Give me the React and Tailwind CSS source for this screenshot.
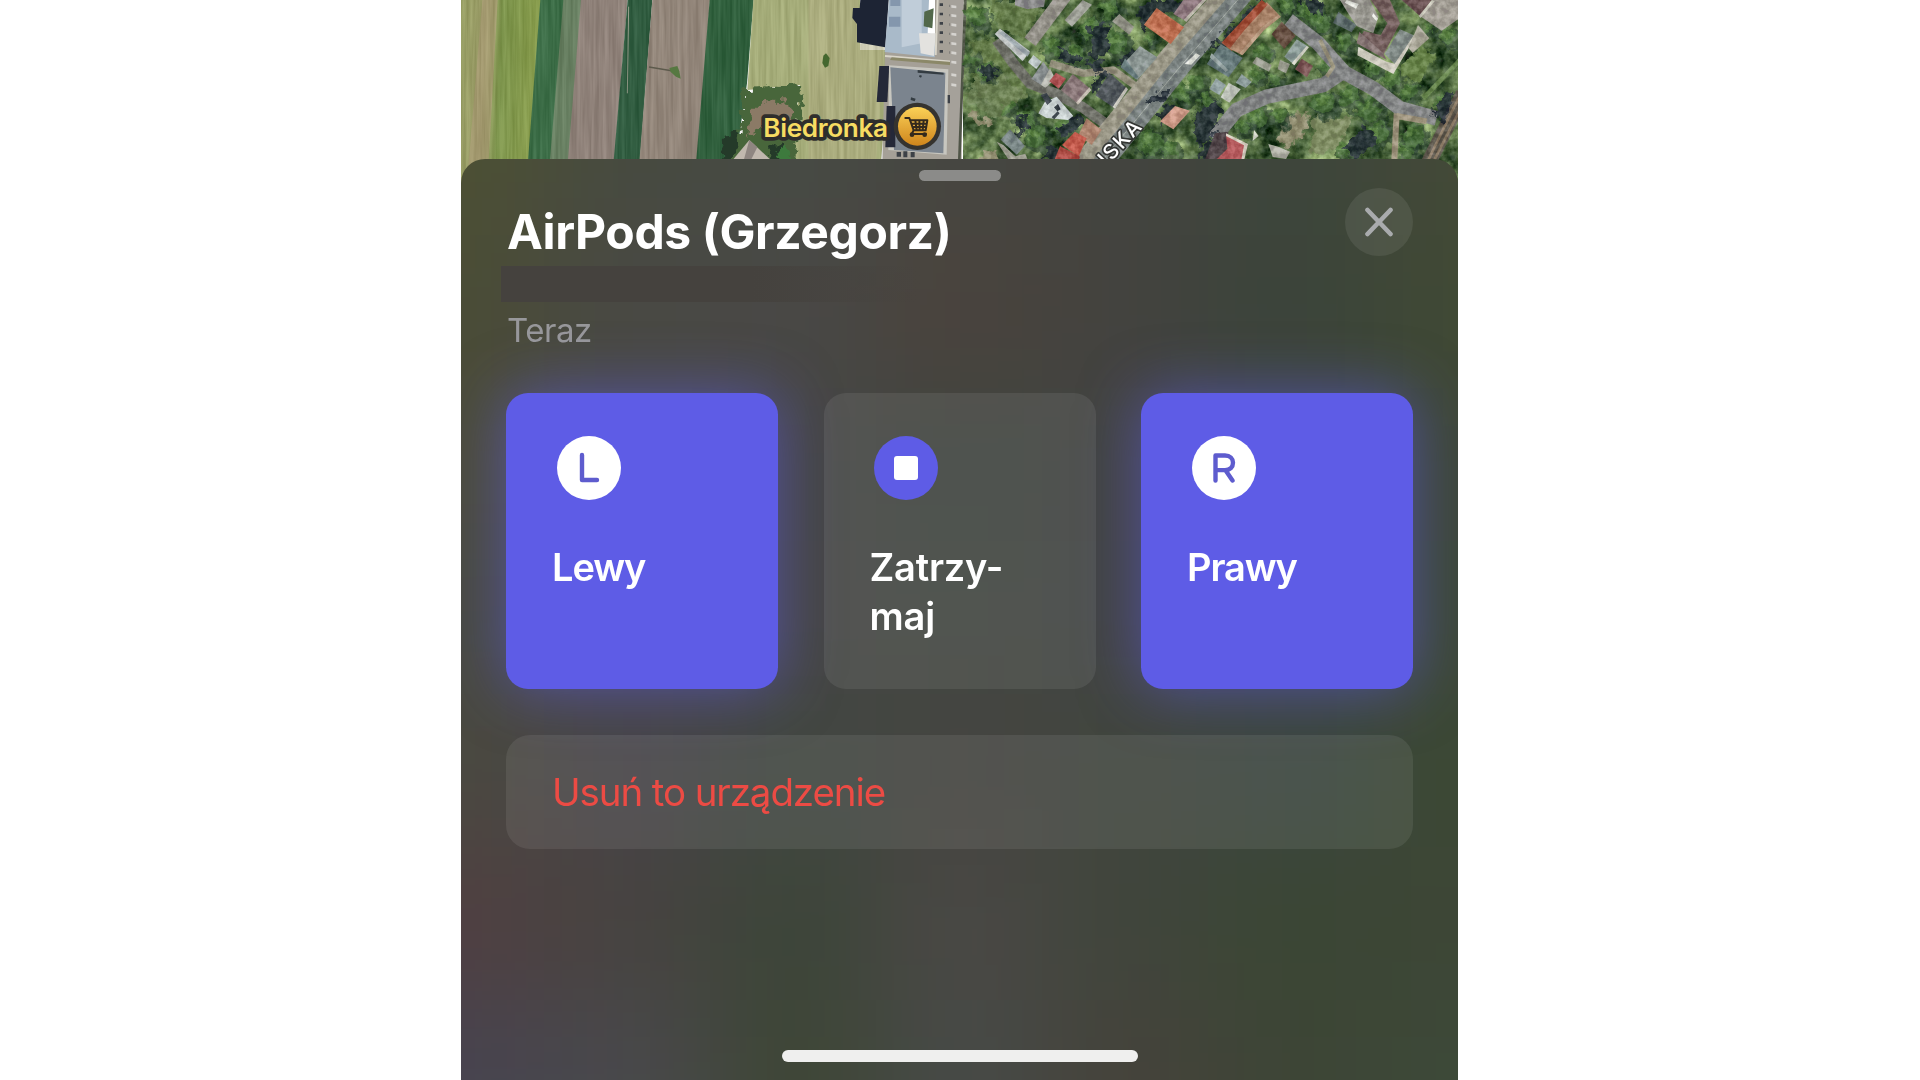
// rows of tint behind the sheet, softened into a frosted wash
const wash = [
  ['#4c5034', '#474a40', '#474a44', '#464641', '#43443f', '#3d453b', '#434938'],
  ['#4a4c36', '#494944', '#494846', '#4a433c', '#43433f', '#3b443a', '#404934'],
  ['#4c4c3c', '#4a4a4a', '#464646', '#3f453f', '#434443', '#404642', '#3e4739'],
  ['#484a42', '#484849', '#464645', '#434742', '#424443', '#404642', '#3d4838'],
  ['#4a4940', '#474449', '#414741', '#454440', '#41463e', '#3b4640', '#3c4834'],
  ['#503f41', '#474340', '#3c4539', '#4a4845', '#40453c', '#3b4634', '#3d4636'],
  ['#474450', '#49494c', '#3e4636', '#474a47', '#45433b', '#3d4536', '#3d4938'],
]

const trees = [
  [80, 50, 40], [60, 180, 30], [110, 215, 34], [310, 140, 42], [420, 90, 45], [500, 130, 46],
  [380, 170, 40], [480, 30, 38], [600, 120, 22], [230, 360, 34], [260, 410, 44], [340, 380, 34],
  [180, 330, 22], [700, 280, 40], [740, 250, 34], [600, 430, 50], [660, 450, 34], [770, 300, 30],
  [1010, 20, 40], [1080, 40, 44], [1120, 70, 36], [1180, 130, 36], [1270, 210, 30], [1330, 240, 36],
  [1380, 280, 34], [940, 160, 30], [920, 230, 30], [980, 240, 24], [1120, 200, 26], [920, 350, 44],
  [880, 380, 30], [990, 350, 30], [1120, 310, 44], [1200, 290, 40], [1260, 330, 46], [1280, 400, 44],
  [1190, 450, 34], [1390, 410, 44], [1370, 460, 34], [1480, 300, 30], [1500, 110, 34], [1440, 90, 24],
]

const shadows = [
  'M560 20l60-20h90l-30 45-70-5-30 60z',
  'M420 80l50-20 10 90-50 30z',
  'M400 200l60-30-10 45z',
  'M600 290l60-30-10 40-60 10z',
  'M330 150l70 20-20 30-55-20z',
  'M418 262l38-50 20 8-38 66z',
  'M620 340l40-30 15 15-40 50z',
  'M730 350l60-50 30 30-40 80-40 40z',
  'M740 478l55-85 30 15-15 70z',
  'M1180 440l60-60 50 30-70 68z',
  'M85 195l50 5 10 30-40 10z',
  'M195 350l40-5 5 40-40 20z',
  'M330 380l60-40 10 30-70 50z',
  'M270 478l20-40 50 20-10 20z',
  'M770 150l90-80 60-70h25l-115 140z',
  'M500 190l55-45 10 12-50 45z',
  'M1440 340l45-50 30-10-40 90z',
  'M1050 0h60l10 50-40-20z',
]

function Satellite() {
  return (
    <svg viewBox="0 0 2991 585" className="block h-[195px] w-full" aria-hidden="true">
      <defs>
        <filter id="leaves" x="0" y="0" width="100%" height="100%" colorInterpolationFilters="sRGB">
          <feTurbulence type="fractalNoise" baseFrequency="0.014" numOctaves="4" seed="8" />
          <feColorMatrix values="1.1 0 0 0 -0.24  1.1 0 0 0 -0.13  0.8 0 0 0 -0.16  0 0 0 0 1" />
        </filter>
        <filter id="furrows" x="0" y="0" width="100%" height="100%" colorInterpolationFilters="sRGB">
          <feTurbulence type="fractalNoise" baseFrequency="0.09 0.004" numOctaves="3" seed="3" />
          <feColorMatrix values="2 0 0 0 -0.5  2 0 0 0 -0.5  2 0 0 0 -0.5  0 0 0 0 0.09" />
        </filter>
        <filter id="grain" x="0" y="0" width="100%" height="100%" colorInterpolationFilters="sRGB">
          <feTurbulence type="fractalNoise" baseFrequency="0.05" numOctaves="3" seed="5" />
          <feColorMatrix values="2.4 0 0 0 -0.75  2.4 0 0 0 -0.7  2.4 0 0 0 -0.8  0 0 0 0 0.16" />
        </filter>
        <filter id="ragged" x="-10%" y="-10%" width="120%" height="120%" colorInterpolationFilters="sRGB">
          <feTurbulence type="fractalNoise" baseFrequency="0.04" numOctaves="3" seed="2" result="n" />
          <feDisplacementMap in="SourceGraphic" in2="n" scale="46" xChannelSelector="R" yChannelSelector="G" />
        </filter>
        <linearGradient id="meadow" x1="0" x2="1" y1="0" y2="0.1">
          <stop offset="0" stopColor="#98a25f" />
          <stop offset="0.35" stopColor="#9c9d64" />
          <stop offset="0.55" stopColor="#7d9748" />
          <stop offset="1" stopColor="#8aa048" />
        </linearGradient>
        <linearGradient id="pin" x1="0" x2="0" y1="0" y2="1">
          <stop offset="0" stopColor="#fbd157" />
          <stop offset="1" stopColor="#cf851c" />
        </linearGradient>
      </defs>

      {/* fields */}
      <g transform="translate(-18 0)">
        <path fill="url(#meadow)" d="M0 0h260l-45 585H0z" />
        <path fill="#ab9c72" opacity=".75" d="M82 0h46l-28 500H40z" />
        <path fill="#356b41" d="M256 0h90l-50 585h-85z" />
        <path fill="#66805f" d="M325 0h56l-38 585h-67z" />
        <path fill="#918279" d="M378 0h140l-48 585H330z" />
        <path fill="#29593a" d="M518 0h74l-45 585h-80z" />
        <path stroke="#97a08c" strokeWidth="3" fill="none" d="M521 20l-4 260" />
        <path fill="#948679" d="M592 0h173l-43 585H545z" />
        <path fill="#2a5e38" d="M764 0h132l-20 250-50 335H715z" />
        <path fill="#a8b078" d="M895 0h320v150h90l-35 435H990l45-330-158 15z" />
        <path fill="#b2b081" opacity=".55" d="M1060 0h150v130h80l-30 400h-200z" />
        <rect width="1300" height="585" filter="url(#furrows)" />
        <g filter="url(#ragged)">
          <path fill="#48663b" d="M868 268l178-14-28 250H805l55-130z" />
          <path fill="#8b7a66" d="M925 300l80 5 10 60-90 15-45 30 5-70z" />
          <path fill="#243a29" d="M800 410l50-10-15 80h-30zM940 430l50 10 10 50h-60z" />
          <path fill="#3d7a3d" d="M968 455l30-10 10 34h-40z" />
        </g>
        <path fill="#c1b8ae" d="M835 478l48-58 62 58z" />
        <path fill="#8f8681" d="M883 420l24 22-18 36h-22z" />
        <path fill="#44672f" d="M1113 160l11 14-4 24-10 5-8-14 3-22z" />
        <path stroke="#5d5a4c" strokeWidth="5" fill="none" d="M582 201l72 12" />
        <path fill="#567841" d="M643 204l24-6 6 16 4 22-14-6-16-14z" />
      </g>

      {/* supermarket block */}
      <g transform="translate(-18 0)">
        <path fill="#a5a097" d="M1290 150l150-10V0h80v585h-240z" />
        <path fill="#1d2434" d="M1216 0h85l-10 142-85-15v-55l-14-18 2-30h20z" />
        <path fill="#a9bac9" d="M1302 0h120l-4 100 24 5-3 67-150-16z" />
        <path fill="#cbd5df" d="M1340 0h60v130l-60 12z" opacity=".7" />
        <path fill="#8497ad" d="M1302 50h34v30h-34zM1306 0h30v18h-30z" />
        <path fill="#e3e2df" d="M1392 100h50l-5 68-40-8z" />
        <path fill="#52684a" d="M1408 35l28-10-4 60-26-6z" />
        <path stroke="#d9d5c9" strokeWidth="6" fill="none" d="M1290 168l210 18M1448 0l-6 165" />
        <path fill="#8b8868" d="M1310 172l180 14v10l-185-16z" />
        <path fill="#242838" d="M1273 198h30l-6 108h-32z" />
        <path fill="#c7c6bf" d="M1302 196l178 12-5 256-175-14z" />
        <path fill="#7b848e" d="M1306 202l165 16-6 242-148-10z" />
        <path fill="#242838" d="M1295 318h26v124h-30z" />
        <path fill="#343c42" d="M1388 210l78 8v6l-78-6zM1394 225l7 2-3 6-6-3zM1368 292l14 4-3 8-12-4z" />
        <g fill="#3d4147">
          {[10, 38, 66, 94, 122, 150].map((y) => (
            <path key={y} d={`M1454 ${y}h10v8h-10zM1484 ${y + 4}h14v7h-14z`} />
          ))}
          <path d="M1478 285h22v25h-22zM1325 456h13v14h-13zM1345 454h12v18h-12zM1367 456h12v16h-12z" />
        </g>
      </g>

      {/* housing estate */}
      <g transform="translate(1467 0)">
        <rect x="40" width="1490" height="585" filter="url(#leaves)" />
        <path fill="#a5a19a" d="M0 0h48L20 585H0z" />
        <g fill="#d5d3cf">
          {[15, 42, 70, 98, 126, 154, 182, 220, 250].map((y) => (
            <path key={y} d={`M4 ${y}l15 2v8l-15-2z`} />
          ))}
        </g>
        <path fill="#505548" d="M42 0h8L28 585h-8z" />

        <g filter="url(#ragged)">
          <path fill="#688048" d="M120 0h100l60 30-60 90-80-40zM60 130l60-20 60 60 60 90-30 50-60 20-80-60z" opacity=".8" />
          <path fill="#6f8355" d="M50 240l100-20 70 60-30 70-60 10-80-60z" opacity=".8" />
          <path fill="#958f72" d="M60 330l70 40-10 14-60-30zM95 450l50 14-10 22H90zM1020 345l60-6-10 60-60 40-30-14z" />
          <path fill="#829064" d="M1090 350l80 10 40-10-50 100-80 20z" />
          <path fill="#668345" d="M1360 190l60-50 40 30-50 70-60 20z" />
          {trees.map(([x, y, r]) => (
            <g key={`${x}-${y}`}>
              <circle cx={x + 8} cy={y + 8} r={r} fill="#20382a" opacity=".6" />
              <circle cx={x - 3} cy={y - 3} r={r * 0.75} fill="#4c7839" opacity=".7" />
              <circle cx={x - 8} cy={y - 9} r={r * 0.35} fill="#6a974b" opacity=".6" />
            </g>
          ))}
        </g>

        {/* streets */}
        <g fill="none" strokeLinejoin="round">
          <path stroke="#6f6e69" strokeWidth="32" d="M140 120l50 70 50 60 75 30 80 40 70 50" />
          <path stroke="#9b9590" strokeWidth="42" d="M350-20L240 125" />
          <path stroke="#968f7d" strokeWidth="22" d="M300 190l100 30 90-10 70 50" />
          <path stroke="#a19b8c" strokeWidth="92" d="M895-70L680 170 385 530" />
          <path stroke="#7b8285" strokeWidth="58" d="M925-70L706 182 410 550" />
          <path stroke="#a8adab" strokeWidth="3" d="M906-50L682 210 400 550" />
          <path stroke="#85858a" strokeWidth="44" d="M1015 60l90 70 75 85-60 40-170 35-90 40-70 85" />
          <path stroke="#85858a" strokeWidth="44" d="M1160 205l110 60 80 60 110 30" />
          <path stroke="#a39a84" strokeWidth="12" d="M1110 120l40 80-20 30" />
          <path stroke="#a3957f" strokeWidth="18" d="M1340 340l-8 160M1340 348l90 16" />
          <path stroke="#5d544c" strokeWidth="46" d="M1540 280l-110 220" />
          <path stroke="#8d7763" strokeWidth="8" d="M1530 285l-105 215M1550 290l-110 215" />
          <path stroke="#68894c" strokeWidth="14" d="M1530 180l-110 115" />
        </g>

        <g filter="url(#ragged)" fill="#182131" opacity=".85">
          {shadows.map((d) => <path key={d} d={d} />)}
        </g>

        {/* roofs */}
        <path fill="#8f8d92" d="M195 0h90l-3 20-50 8-37-12z" />
        <path fill="#c9ccd0" d="M150 86l90 68-22 30-84-82z" />
        <path fill="#a3adb7" d="M157 92l83 66-8 12-84-70z" />
        <path fill="#c7d0d5" d="M250 165l25 20-16 22-25-20z" />
        <path fill="#8b9096" d="M280 185l32 45-28 32-40-26z" />
        <path fill="#c0bfba" d="M300 205l16 32-30 26-13-9z" />
        <path fill="#b74a50" d="M318 218l30 18-22 30-28-22z" />
        <path fill="#8e767c" d="M368 222l50 42-36 46-50-40z" />
        <path fill="#d1c5bd" d="M418 262l6 8-40 44-6-6z" />
        <path fill="#4b505a" d="M478 218l56 50-38 58-60-40z" />
        <path fill="#d5d1ca" d="M534 268l-38 58-8-5 40-60z" />
        <path fill="#8f999a" d="M570 138l52 34-60 68-50-40z" />
        <path fill="#6b8086" d="M525 175l40 55-8 8-45-36z" />
        <path fill="#a5a59f" d="M398 0l28 14-60 66-22-20z" />
        <path fill="#98968d" d="M508 42l44 38-14 24-52-40z" />
        <path fill="#c96a4c" d="M620 24l82 58-40 50-80-58z" />
        <path fill="#dd8867" d="M620 24l-20 48 62 60-80-58z" opacity=".45" />
        <path fill="#907480" d="M700 0h62l-60 60-32-18z" />
        <path fill="#cec5bc" d="M757 0h12l-60 66-8-6z" />
        <path fill="#a44a35" d="M935 0l20 18-110 135-30-25z" />
        <path fill="#b08268" d="M950 5l42 45-50 40-65 76-38-20z" />
        <path fill="#a84630" d="M935 0l18 14-118 128-20-14z" />
        <path fill="#c9a68c" d="M992 50l-50 40-65 76-8-6 64-76 52-40z" opacity=".8" />
        <path fill="#667a80" d="M812 132l66 42-42 58-66-40z" />
        <path fill="#99a7aa" d="M785 160l50 50-8 6-48-44z" />
        <path fill="#9aaaaf" d="M798 235l30 20-20 30-30-18z" />
        <path fill="#cccfc9" d="M836 248l36 20-34 40-26-16z" />
        <path fill="#93a3a7" d="M875 222l30 24-18 18-30-16z" />
        <path fill="#63463b" d="M995 65l42 42-34 40-38-44z" />
        <path fill="#8fa0a0" d="M1040 118l35 22-42 54-30-24z" />
        <path fill="#dfddd3" d="M1070 138l7 4-44 54-8-6z" />
        <path fill="#7d4f53" d="M1055 176l34 22-18 34-36-24z" />
        <path fill="#a1a196" d="M920 170l45 25-8 20-50-26zM990 180l30 12-12 28-25-12z" />
        <path fill="#58666a" d="M1165 35l55 40-15 22-56-28z" />
        <path fill="#9f9b97" d="M1170 0h90l25 50-15 50-50-22-30-45z" />
        <path fill="#f1f1ed" d="M1190 0l36 12-8 14-34-18zM1270 40l14 16-5 8-13-16z" />
        <path fill="#74595c" d="M1262 0h58l30 70-50 95-80-40 22-32 50 12 20-35z" />
        <path fill="#8d777a" d="M1228 95l72 65 10 20-90-50z" />
        <path fill="#858e8e" d="M1350 88l42 18-54 90-34-34z" />
        <path fill="#d8d2c8" d="M1225 140l85 45 24 6 58-86 4 5-66 112-108-56z" />
        <path fill="#68494f" d="M1355 0h90l-35 48z" />
        <path fill="#aaa29c" d="M1445 0h90v50l-60 42-62-42z" />
        <path fill="#ded9cf" d="M1446 0l8 4-42 50-6-6z" />
        <path fill="#b0aa9e" d="M1404 75l34 40-50 44-12-14z" />
        <path fill="#dce3e8" d="M285 305l35-15 50 58-16 12-65-6-24-14z" />
        <path fill="#303744" d="M272 285l18-6 16 24-14 12zM312 322l12-10 8 16-10 6zM305 352l18-18 6 6-16 18z" />
        <path fill="#79868a" d="M180 388l45 50-25 26-48-45z" />
        <path fill="#a9a79c" d="M140 425l20 10 36 34 30-8 10 24h-56z" />
        <path fill="#b98672" d="M410 355l45 34-30 46-40-30z" />
        <path fill="#d3564a" d="M375 395l35 20-24 55-50-35z" />
        <path fill="#b5413d" d="M330 438l60 32-10 30h-75z" />
        <path fill="#d99b8a" d="M675 318l45 14-50 56-40-24z" />
        <path fill="#4a3a43" d="M795 400l40-5-8 90h-65z" />
        <path fill="#bd5058" d="M828 402l62 32-14 50h-82l38-38z" />
        <path fill="#dfd3c8" d="M828 400l66 32-12 50-8-2 8-44-54-28z" />
        <path fill="#e4e3da" d="M912 390l14 18-18 14z" />
        <path fill="#b9b7ae" d="M955 432l30 8 35 15-12 22-40-6z" />
        <path fill="#eeeeea" d="M738 160l12 6-26 28-20-2z" />
        <rect x="40" width="1490" height="585" filter="url(#grain)" />

        <text
          transform="translate(470 500) rotate(-47)"
          className="font-['Inter',sans-serif] text-[62px] font-medium"
          fill="#fff"
          stroke="#343633"
          strokeWidth="10"
          strokeLinejoin="round"
          paintOrder="stroke"
          letterSpacing="5"
        >
          ISKA
        </text>
      </g>

      {/* shop label */}
      <g transform="translate(-18 0)">
        <text
          x="925"
          y="410"
          textLength="373"
          lengthAdjust="spacingAndGlyphs"
          className="font-['Inter',sans-serif] text-[75px] font-semibold tracking-[-1px]"
          fill="#f7dc62"
          stroke="#2f2e2c"
          strokeWidth="22"
          strokeLinejoin="round"
          paintOrder="stroke"
        >
          Biedronka
        </text>
        <circle cx="1387" cy="379" r="71" fill="#35332f" />
        <circle cx="1387" cy="379" r="58" fill="url(#pin)" />
        <g fill="none" stroke="#33291c" strokeWidth="6" strokeLinecap="round" strokeLinejoin="round">
          <path d="M1351 354h12l13 37h36l5-30h-50M1376 391l-6 11h43M1371 371h44M1374 381h40M1381 362l4 28M1393 362l1 28M1406 362l-3 28" />
        </g>
        <circle cx="1371" cy="404" r="7" fill="#33291c" />
        <circle cx="1409" cy="404" r="7" fill="#33291c" />
      </g>
    </svg>
  )
}

function Wash() {
  return (
    <svg viewBox="0 0 997 921" preserveAspectRatio="none" className="absolute inset-0 h-full w-full" aria-hidden="true">
      <filter id="frost" filterUnits="userSpaceOnUse" x="-300" y="-300" width="1600" height="1520" colorInterpolationFilters="sRGB">
        <feGaussianBlur stdDeviation="56" />
      </filter>
      <g filter="url(#frost)">
        <rect x="-300" y="-300" width="1600" height="1520" fill="#42453f" />
        {wash.map((row, r) =>
          row.map((fill, c) => {
            const x = c === 0 ? -300 : c * 166 - 83
            const y = r === 0 ? -300 : r * 153 - 77
            return <rect key={`${r}-${c}`} x={x} y={y} width={c === 0 ? 384 : c === 6 ? 400 : 167} height={r === 0 ? 377 : r === 6 ? 400 : 154} fill={fill} />
          })
        )}
      </g>
    </svg>
  )
}

function Bud({ children, label }) {
  return (
    <button className="flex flex-col items-start rounded-[22px] bg-[#5e5ce6] pl-[46px] pt-[43px] text-left shadow-[0_0_60px_rgba(94,92,230,0.55)]">
      <svg viewBox="0 0 64 64" className="ml-[5px] size-16" fill="none" stroke="#5e5cce" strokeWidth="4.4" strokeLinecap="round" strokeLinejoin="round">
        <circle cx="32" cy="32" r="32" fill="#fff" stroke="none" />
        {children}
      </svg>
      <span className="mt-[42.500px] text-[38px] font-semibold leading-[49.5px] tracking-[-1.1px]">{label}</span>
    </button>
  )
}

export default function App() {
  return (
    <main className="flex h-[1080px] justify-center overflow-hidden bg-white font-['Inter','Liberation_Sans',sans-serif] text-white">
      <div className="ml-[-1px] w-[997px] overflow-hidden">
        <Satellite />
        <section className="relative isolate -mt-9 h-[921px] overflow-hidden rounded-t-[24px]">
          <Wash />
          <div className="relative flex h-full flex-col px-[45px]">
            <div className="mt-[11px] h-[11px] w-[82px] shrink-0 self-center rounded-full bg-[#8b8b89]" />

            <header className="mt-[7px] flex justify-between">
              <h1 className="ml-px mt-[14px] text-[48px] font-bold leading-[60px] tracking-[-0.4px]">AirPods (Grzegorz)</h1>
              <button aria-label="Zamknij" className="flex size-[68px] items-center justify-center rounded-full bg-white/8">
                <svg viewBox="0 0 30 30" className="-ml-px size-[30px]" fill="none" stroke="#a9abad" strokeWidth="4.6" strokeLinecap="round">
                  <path d="M3.500 3l23 24M26.500 3l-23 24" />
                </svg>
              </button>
            </header>
            <div className="-ml-[5px] mt-[4px] h-9 w-[420px] shrink-0 bg-linear-to-r from-[#45423e] from-60% to-transparent" />
            <p className="ml-px mt-[8px] text-[33px] leading-10 tracking-[-0.5px] text-[#98989b]">Teraz</p>

            <div className="mt-[43px] grid h-[296px] shrink-0 grid-cols-3 gap-[45.5px]">
              <Bud label="Lewy">
                <path d="M25 19v25h15" />
              </Bud>
              <button className="flex flex-col items-start rounded-[22px] bg-white/8 pl-[46px] pt-[43px] text-left">
                <span className="ml-[4px] flex size-16 items-center justify-center rounded-full bg-[#5e5ce6]">
                  <span className="size-6 rounded-[3px] bg-white" />
                </span>
                <span className="mt-[42.500px] text-[38px] font-semibold leading-[49.5px] tracking-[-0.200px]">
                  Zatrzy-
                  <br />
                  maj
                </span>
              </button>
              <Bud label="Prawy">
                <path d="M23.500 44.500V19.500h9.500c5 0 8 3 8 7.300s-3 7.300-8 7.300h-9.500M33.500 34.300l7 10.200" />
              </Bud>
            </div>

            <button className="mt-[46px] flex h-[114px] shrink-0 items-center rounded-[24px] bg-white/8 pl-[46px] pt-[2px] text-left text-[38.5px] tracking-[-1.1px] text-[#ec4b44]">
              Usuń to urządzenie
            </button>
          </div>
          <div className="absolute bottom-[18px] left-[321px] h-3 w-[356px] rounded-full bg-[#efefee]" />
        </section>
      </div>
    </main>
  )
}
